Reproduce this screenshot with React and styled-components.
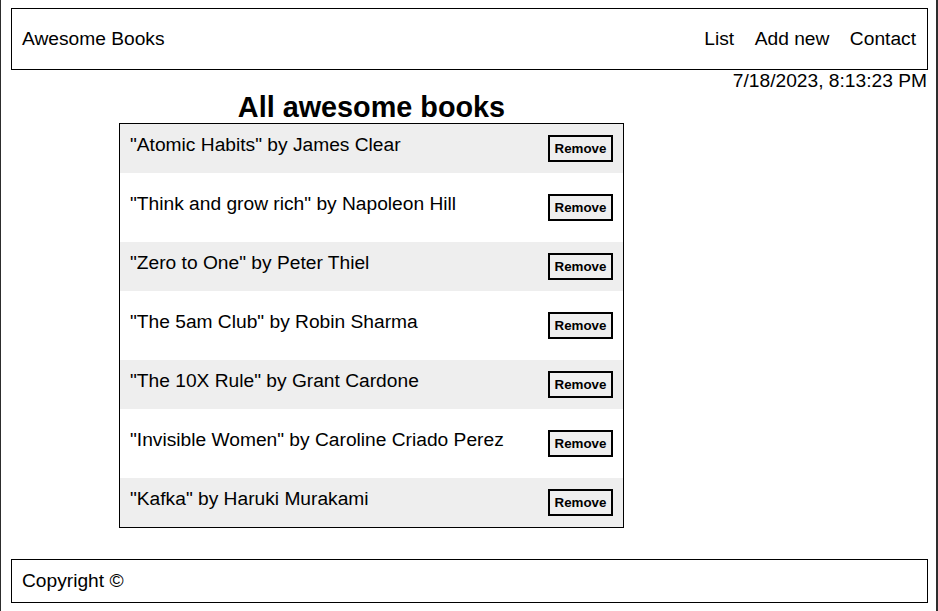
import { useState } from "react";
import styled, { createGlobalStyle } from "styled-components";

const GlobalStyle = createGlobalStyle`
    html, body {
        margin: 0;
        padding: 0;
        background: #fff;
    }
    body {
        font-family: "Liberation Sans", Arial, sans-serif;
        color: #000;
    }
`;

const initialBooks = [
    { title: "Atomic Habits", author: "James Clear" },
    { title: "Think and grow rich", author: "Napoleon Hill" },
    { title: "Zero to One", author: "Peter Thiel" },
    { title: "The 5am Club", author: "Robin Sharma" },
    { title: "The 10X Rule", author: "Grant Cardone" },
    { title: "Invisible Women", author: "Caroline Criado Perez" },
    { title: "Kafka", author: "Haruki Murakami" },
];

export default function App() {
    const [books, setBooks] = useState(initialBooks);

    const removeBook = (index) => {
        setBooks((list) => list.filter((_, i) => i !== index));
    };

    return (
        <Page>
            <GlobalStyle />
            <Header>
                <Brand>Awesome Books</Brand>
                <Nav>
                    <NavLink>List</NavLink>
                    <NavLink>Add new</NavLink>
                    <NavLink>Contact</NavLink>
                </Nav>
            </Header>

            <DateLine>7/18/2023, 8:13:23 PM</DateLine>

            <BooksSection>
                <Title>All awesome books</Title>
                <BookList>
                    {books.map((book, i) => (
                        <BookRow key={book.title} $shaded={i % 2 === 0}>
                            <BookText>{`"${book.title}" by ${book.author}`}</BookText>
                            <RemoveButton onClick={() => removeBook(i)}>Remove</RemoveButton>
                        </BookRow>
                    ))}
                </BookList>
            </BooksSection>

            <Footer>Copyright ©</Footer>
        </Page>
    );
}

const Page = styled.div`
    box-sizing: border-box;
    min-height: 611px;
    padding: 8px 8px 8px 10px;
    border-left: 1px solid #2d2d2d;
    border-right: 2px solid #2d2d2d;
    display: flex;
    flex-direction: column;
`;

const Header = styled.header`
    box-sizing: border-box;
    height: 62px;
    border: 1px solid #000;
    padding: 0 11px 0 10px;
    display: flex;
    align-items: center;
    justify-content: space-between;
    font-size: 19.2px;
`;

const Brand = styled.span``;

const Nav = styled.nav`
    display: flex;
    gap: 20.5px;
`;

const NavLink = styled.span`
    cursor: pointer;
`;

const DateLine = styled.p`
    margin: 0;
    text-align: right;
    font-size: 19.2px;
    line-height: 21px;
    padding-right: 1px;
`;

const BooksSection = styled.section`
    width: 505px;
    margin-left: 108px;
`;

const Title = styled.h1`
    margin: 0;
    text-align: center;
    font-size: 28.8px;
    line-height: 31px;
    padding-top: 1px;
    font-weight: bold;
`;

const BookList = styled.ul`
    list-style: none;
    margin: 0;
    padding: 0;
    border: 1px solid #000;
    display: flex;
    flex-direction: column;
    gap: 10px;
`;

const BookRow = styled.li`
    box-sizing: border-box;
    height: 49px;
    padding: 10px 10px 0 10px;
    display: flex;
    align-items: flex-start;
    justify-content: space-between;
    background: ${(p) => (p.$shaded ? "#eeeeee" : "#ffffff")};
`;

const BookText = styled.span`
    font-size: 19.2px;
    line-height: 22px;
`;

const RemoveButton = styled.button`
    box-sizing: border-box;
    margin-top: 1px;
    height: 27px;
    width: 65px;
    padding: 0;
    border: 2px solid #000;
    background: #efefef;
    font-family: "Liberation Sans", Arial, sans-serif;
    font-size: 13.33px;
    font-weight: bold;
    color: #000;
    cursor: pointer;
`;

const Footer = styled.footer`
    box-sizing: border-box;
    margin-top: 31px;
    height: 44px;
    border: 1px solid #000;
    padding: 0 10px;
    display: flex;
    align-items: center;
    font-size: 19.2px;
`;
